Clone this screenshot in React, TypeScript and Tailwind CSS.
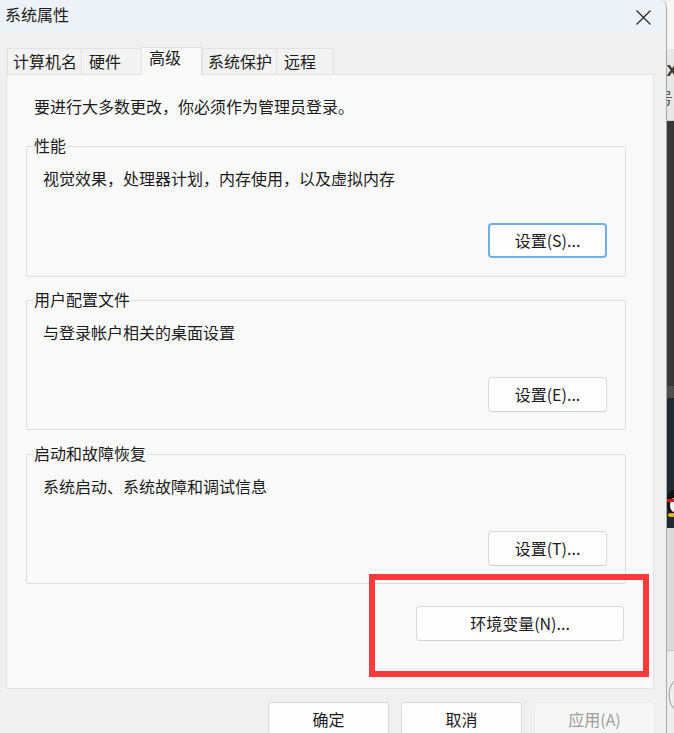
import React from "react";

const font = "font-['Noto_Sans_CJK_SC','Noto_Sans',sans-serif]";

function Btn({
  label,
  w = "w-[119px]",
  focused = false,
  disabled = false,
}: {
  label: string;
  w?: string;
  focused?: boolean;
  disabled?: boolean;
}) {
  const base = `${w} h-[35px] rounded-[4px] flex items-center justify-center pb-[2px] text-[16px] leading-[22px] shrink-0`;
  if (disabled)
    return (
      <div className={`${base} bg-[#f6f6f6] border border-[#ebebeb] text-[#9d9d9d]`}>{label}</div>
    );
  if (focused)
    return (
      <div className={`${base} bg-[#fdfdfd] border-2 border-[#6eaeea] text-[#1b1b1b]`}>{label}</div>
    );
  return (
    <div className={`${base} bg-[#fdfdfd] border border-[#d9d9d9] border-b-[#cfcfcf] text-[#1b1b1b]`}>
      {label}
    </div>
  );
}

function Group({
  legend,
  desc,
  btn,
  h,
  mt,
  pb,
  focused = false,
}: {
  legend: string;
  desc: string;
  btn: string;
  h: string;
  mt: string;
  pb: string;
  focused?: boolean;
}) {
  return (
    <div className={`relative ${h} ${mt} border border-[#dedede] rounded-[2px] flex flex-col justify-between pt-[20px] ${pb} pr-[18px]`}>
      <div className="absolute -top-[13px] left-[6px] bg-[#f9f9f9] px-px text-[16px] leading-[22px] text-[#1b1b1b]">
        {legend}
      </div>
      <div className="pl-[16px] text-[16px] leading-[22px] text-[#1b1b1b]">{desc}</div>
      <div className="flex justify-end">
        <Btn label={btn} focused={focused} />
      </div>
    </div>
  );
}

function Tab({
  label,
  w,
  pl,
  selected = false,
  last = false,
}: {
  label: string;
  w: string;
  pl: string;
  selected?: boolean;
  last?: boolean;
}) {
  if (selected)
    return (
      <div
        className={`${w} ${pl} h-[28px] -mb-px relative z-10 bg-[#f9f9f9] border-t border-l border-r border-[#e2e2e2] text-[16px] leading-[18px] pt-0 text-[#1b1b1b]`}
      >
        {label}
      </div>
    );
  return (
    <div
      className={`${w} ${pl} h-[26px] bg-[#f2f2f2] border-t border-l ${last ? "border-r" : ""} border-[#e2e2e2] text-[16px] leading-[22px] pt-px text-[#1b1b1b]`}
    >
      {label}
    </div>
  );
}

export default function App() {
  return (
    <div className={`relative w-[674px] h-[733px] overflow-hidden flex bg-[#ececec] ${font}`}>
      {/* Dialog */}
      <div className="w-[667px] h-[733px] shrink-0 flex flex-col bg-[#f0f0f0] border-r border-[#a9a9a9] rounded-tr-[8px] overflow-hidden">
        {/* Title bar */}
        <div className="h-[34px] shrink-0 bg-[#ecf2f7] flex items-center justify-between pl-[5px] pr-[15px] pb-[6px]">
          <div className="text-[16px] leading-[22px] text-[#1b1b1b]">系统属性</div>
          <svg width="15" height="15" viewBox="0 0 15 15" className="mt-[6px]">
            <path d="M0.5 0.5 L14.5 14.5 M14.5 0.5 L0.5 14.5" stroke="#1f1f1f" strokeWidth="1.1" fill="none" />
          </svg>
        </div>

        {/* Body */}
        <div className="flex flex-col pt-[13px] pl-[6px] pr-[12px]">
          {/* Tabs */}
          <div className="flex items-end pl-px">
            <Tab label="计算机名" w="w-[74px]" pl="pl-[5px]" />
            <Tab label="硬件" w="w-[60px]" pl="pl-[7px]" />
            <Tab label="高级" w="w-[61px]" pl="pl-[7px]" selected />
            <Tab label="系统保护" w="w-[74px]" pl="pl-[5px]" />
            <Tab label="远程" w="w-[58px]" pl="pl-[7px]" last />
          </div>

          {/* Panel */}
          <div className="h-[615px] border border-[#e3e3e3] bg-[#f9f9f9] flex flex-col pt-[20px] pl-[19px] pr-[27px]">
            <div className="ml-[8px] text-[16px] leading-[22px] text-[#1b1b1b]">
              要进行大多数更改，你必须作为管理员登录。
            </div>
            <Group
              legend="性能"
              desc="视觉效果，处理器计划，内存使用，以及虚拟内存"
              btn="设置(S)..."
              h="h-[131px]"
              mt="mt-[29px]"
              pb="pb-[18px]"
              focused
            />
            <Group
              legend="用户配置文件"
              desc="与登录帐户相关的桌面设置"
              btn="设置(E)..."
              h="h-[130px]"
              mt="mt-[23px]"
              pb="pb-[17px]"
            />
            <Group
              legend="启动和故障恢复"
              desc="系统启动、系统故障和调试信息"
              btn="设置(T)..."
              h="h-[130px]"
              mt="mt-[24px]"
              pb="pb-[17px]"
            />
            <div className="mt-[22px] flex justify-end pr-[2px]">
              <Btn label="环境变量(N)..." w="w-[208px]" />
            </div>
          </div>

          {/* Bottom buttons */}
          <div className="mt-[13px] flex justify-end gap-[12px] -mr-px">
            <Btn label="确定" w="w-[121px]" />
            <Btn label="取消" w="w-[121px]" />
            <Btn label="应用(A)" w="w-[121px]" disabled />
          </div>
        </div>
      </div>

      {/* Background strip to the right of the dialog */}
      <div className="flex-1 flex flex-col overflow-hidden">
        <div className="h-[49px] shrink-0 bg-[#f6f6f6]" />
        <div className="h-[72px] shrink-0 bg-[#e8e8e8] border-b border-[#d0d0d0] flex flex-col pt-[8px]">
          <div className="-ml-[6px] text-[20px] leading-[24px] font-bold text-[#3a3a3a] font-['Liberation_Sans',sans-serif]">
            ix
          </div>
          <div className="-ml-[10px] mt-[6px] text-[16px] leading-[20px] text-[#555]">号</div>
        </div>
        <div className="h-[265px] shrink-0 bg-[#373737]" />
        <div className="h-[12px] shrink-0 bg-[#4d4d4d]" />
        <div className="h-[130px] shrink-0 bg-[#1d2a31] flex flex-col pt-[90px]">
          <svg width="8" height="30" viewBox="0 0 8 30">
            <ellipse cx="6" cy="14" rx="6" ry="12" fill="#111" />
            <ellipse cx="7" cy="17" rx="4" ry="7" fill="#f4f4f4" />
            <rect x="0" y="11" width="8" height="3" fill="#d21c1c" />
            <ellipse cx="5" cy="27" rx="4" ry="2" fill="#f2b422" />
          </svg>
        </div>
        <div className="h-[123px] shrink-0 bg-[#dadada] border-b border-[#c4c4c4]" />
        <div className="flex-1 bg-[#ededed] pt-[14px]">
          <svg width="8" height="60" viewBox="0 0 8 60">
            <circle cx="24" cy="30" r="22" stroke="#9a9a9a" strokeWidth="1" fill="none" />
          </svg>
        </div>
      </div>

      {/* Red annotation box */}
      <div className="absolute left-[369px] top-[574px] w-[280px] h-[103px] border-[6px] border-[#fb3b3b]" />
    </div>
  );
}
